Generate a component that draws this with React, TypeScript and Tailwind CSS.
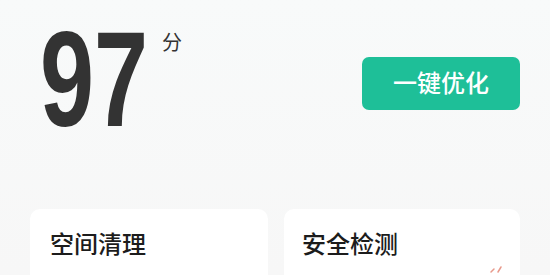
export default function App() {
    return (
        <div
            className="w-[550px] h-[275px] overflow-hidden bg-gradient-to-b from-[#f8fafa] to-[#f7f7f7] px-[30px]"
            style={{ fontFamily: '"Liberation Sans", "Noto Sans CJK SC", sans-serif' }}
        >
            {/* 分数与按钮 */}
            <div className="flex items-start justify-between h-[209px]">
                <div className="flex items-start pt-[12px] pl-[10px]">
                    <div className="w-[122px]">
                        <span className="inline-block origin-left scale-x-[0.72] text-[135px] font-bold leading-none text-[#333333]">
                            97
                        </span>
                    </div>
                    <span className="mt-[21px] text-[20px] leading-none text-[#333333]">分</span>
                </div>
                <button className="mt-[57px] w-[158px] h-[53px] rounded-[7px] bg-[#1ebf98] text-white text-[24px] font-medium leading-none">
                    一键优化
                </button>
            </div>

            {/* 功能卡片 */}
            <div className="flex gap-[16px]">
                <div className="w-[238px] h-[80px] rounded-[10px] bg-white px-[20px] pt-[24px]">
                    <h3 className="text-[24px] font-medium leading-none text-[#1c1c1c]">空间清理</h3>
                </div>
                <div className="relative w-[236px] h-[80px] rounded-[10px] bg-white px-[18px] pt-[24px]">
                    <h3 className="text-[24px] font-medium leading-none text-[#1c1c1c]">安全检测</h3>
                    <svg className="absolute left-[205px] top-[55px] w-[14px] h-[10px]" viewBox="0 0 14 10" fill="none">
                        <path d="M2 8 L5 5 M9 8 L12 3" stroke="#e89a8c" strokeWidth="1.5" strokeLinecap="round" />
                    </svg>
                </div>
            </div>
        </div>
    );
}
